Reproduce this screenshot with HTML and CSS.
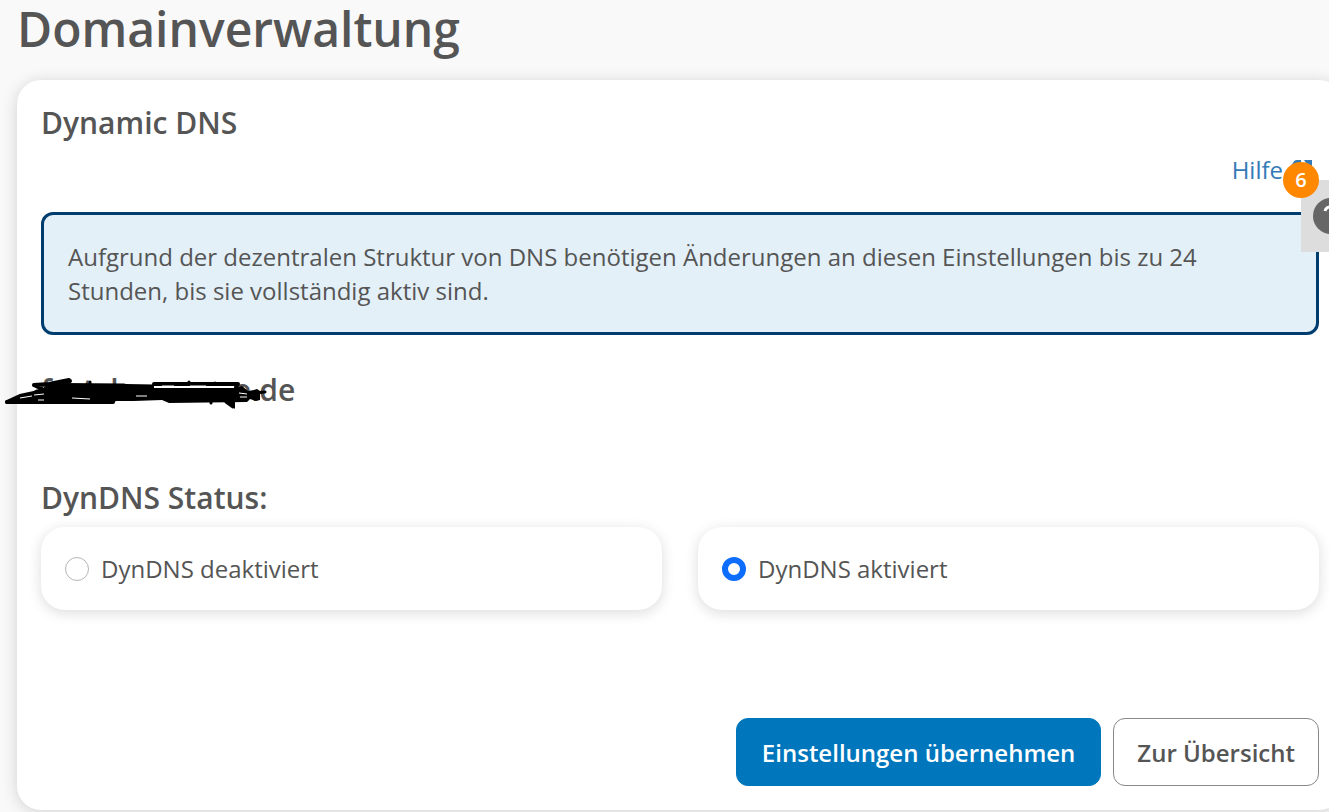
FILE: index.html
```html
<!DOCTYPE html>
<html lang="de">
<head>
<meta charset="utf-8">
<meta name="viewport" content="width=device-width, initial-scale=1">
<title>Domainverwaltung</title>
<link rel="stylesheet" href="styles.css">
</head>
<body>
<main class="page">
  <h1 class="page-title">Domainverwaltung</h1>
  <form class="card">
    <h2 class="heading">Dynamic DNS</h2>
    <div class="help-row">
      <a class="help-link" href="#">Hilfe
        <svg class="help-icon" viewBox="0 0 22 22" aria-hidden="true"><path d="M8 5H4q-2 0-2 2v11q0 2 2 2h11q2 0 2-2v-4" fill="none" stroke="currentColor" stroke-width="3"/><path d="M13 1h8v8l-3-2-7 7-3-3 7-7zM2 4q1-3 4-3h4v3z" fill="currentColor"/></svg></a>
    </div>
    <p class="notice">Aufgrund der dezentralen Struktur von DNS benötigen Änderungen an diesen Einstellungen bis zu 24 Stunden, bis sie vollständig aktiv sind.</p>
    <div class="domain">
      <h2 class="heading domain-name"><span class="masked"><span>f</span><span>st</span><span>l</span><span class="masked-end">e</span></span>.de</h2>
      <svg class="scribble" viewBox="0 0 264 34" aria-hidden="true">
        <g fill="none" stroke="#000" stroke-width="4" stroke-linecap="round" stroke-linejoin="round">
          <path d="M3 25 16 19 30 16 38 12 30 8 45 7 65 3 52 8 66 4M30 8 60 6"/>
          <path d="M3 25H109M8 24 30 19M150 7H234L232 10"/>
          <path d="M207 25V26M222 25 229 30V26M185 6V5M211 7V6M86 6V5M250 16 261 15" stroke-width="3"/>
        </g>
        <path d="M30 16 38 12 42 9 58 6 120 6.500 122 7 150 7.500V11H232L238 9 244 14 250 13 253 12 256 14V23L252 24 246 22 243 25 165 26 158 23 130 24 112 24 108 27H20V24z"/>
        <path d="M222 24h9v8z"/>
        <path d="M16 21l12-2M30 18l10-1M34 23h6M68 21l18 1M132 19h11M158 9h12M186 9h16M235 16l8 1M236 20h7" fill="none" stroke="#fff"/>
      </svg>
    </div>
    <fieldset class="status">
      <legend class="heading status-title">DynDNS Status:</legend>
      <div class="options">
        <label class="option" for="off"><input class="radio" type="radio" name="dyndns" id="off">DynDNS deaktiviert</label>
        <label class="option" for="on"><input class="radio" type="radio" name="dyndns" id="on" checked>DynDNS aktiviert</label>
      </div>
    </fieldset>
    <div class="actions">
      <button class="button primary" type="submit">Einstellungen übernehmen</button>
      <button class="button" type="button">Zur Übersicht</button>
    </div>
  </form>
  <button class="support" type="button" aria-label="Hilfe, 6 Hinweise">
    <svg class="support-icon" viewBox="0 0 38 38" aria-hidden="true"><circle cx="19" cy="19" r="18" fill="#666"/><path d="M13 14c1-6 13-6 13 1 0 5-7 4-7 9M19 27v4" fill="none" stroke="#fff" stroke-width="3"/></svg>
    <span class="badge">6</span>
  </button>
</main>
</body>
</html>
```
FILE: styles.css
```css
* { box-sizing: border-box; }
body {
  margin: 0;
  background: #f9f9f9;
  color: #555;
  font-family: "Open Sans", "Noto Sans", sans-serif;
  font-size: 24px;
  line-height: 34px;
}
.page { position: relative; overflow-x: clip; padding: 0 0 2px 17px; }
.page-title { margin: 0 0 22px; font-size: 48px; line-height: 58px; font-weight: 600; }
.card {
  margin-right: -14px;
  padding: 24px;
  border-radius: 24px;
  background: #fff;
  box-shadow: 0 2px 16px rgba(0, 0, 0, .16);
}
.heading { margin: 0; font-size: 30px; line-height: 38px; font-weight: 600; }
.help-row { display: flex; justify-content: flex-end; padding: 11px 6px 0 0; }
.help-link { display: flex; align-items: center; gap: 8px; color: #337ab7; text-decoration: none; }
.help-icon { width: 22px; height: 22px; }
.notice {
  margin: 25px 0 0;
  padding: 25px 24px 24px;
  border: 3px solid #003d6f;
  border-radius: 12px;
  background: #e3f0f8;
}
.domain { position: relative; margin-top: 36px; }
.domain-name { display: flex; }
.masked { display: flex; gap: 16px; width: 210px; }
.masked-end { margin-left: auto; }
.scribble { position: absolute; left: -37px; top: 6px; width: 264px; height: 34px; }
.status { margin: 70px 0 0; padding: 0; border: 0; min-width: 0; }
.status-title { padding: 0; }
.options { display: grid; grid-template-columns: 1fr 1fr; gap: 36px; margin-top: 10px; }
.option {
  display: flex;
  align-items: center;
  gap: 12px;
  padding: 25px 24px 24px;
  border-radius: 24px;
  background: #fff;
  box-shadow: 0 3px 14px rgba(0, 0, 0, .14);
}
.radio {
  appearance: none;
  width: 24px;
  height: 24px;
  margin: 0;
  border: 1px solid #b5b5b5;
  border-radius: 50%;
  background: #fff;
}
.radio:checked { border: 6px solid #0d6efd; }
.actions { display: flex; justify-content: flex-end; gap: 12px; margin-top: 108px; }
.button {
  padding: 17px 23px 15px;
  border: 1px solid #888;
  border-radius: 12px;
  background: #fff;
  color: #555;
  font: 600 24px/34px "Open Sans", "Noto Sans", sans-serif;
}
.primary { padding: 17px 25px 15px; border-color: #0077bd; background: #0077bd; color: #fff; }
.support {
  position: absolute;
  right: 0;
  top: 180px;
  width: 28px;
  height: 72px;
  padding: 0;
  border: 0;
  background: #ddd;
}
.support-icon { position: absolute; left: 11px; top: 17px; width: 38px; height: 38px; }
.badge {
  position: absolute;
  left: -18px;
  top: -18px;
  width: 36px;
  height: 36px;
  border-radius: 50%;
  background: #ff8800;
  color: #fff;
  font: 600 20px/36px "Open Sans", sans-serif;
}
```
